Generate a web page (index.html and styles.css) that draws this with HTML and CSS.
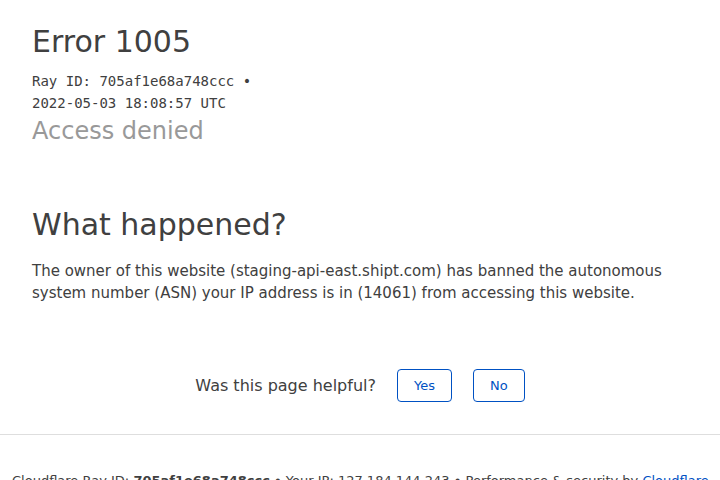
FILE: index.html
```html
<!DOCTYPE html>
<html>
<head>
<meta charset="utf-8">
<link rel="stylesheet" href="styles.css">
</head>
<body>
<div class="page">
  <header class="head">
    <h1 class="title">Error <span>1005</span></h1>
    <div class="ray">Ray ID: 705af1e68a748ccc •<br>2022-05-03 18:08:57 UTC</div>
    <h2 class="sub">Access denied</h2>
  </header>
  <section class="what">
    <h2 class="what-title">What happened?</h2>
    <p class="what-text">The owner of this website (staging-api-east.shipt.com) has banned the autonomous system number (ASN) your IP address is in (14061) from accessing this website.</p>
  </section>
  <div class="feedback">
    <span class="q">Was this page helpful?</span>
    <button class="btn">Yes</button>
    <button class="btn">No</button>
  </div>
  <footer class="foot">Cloudflare Ray ID: <strong>705af1e68a748ccc</strong> • Your IP: 127.184.144.243 • Performance &amp; security by <a href="#">Cloudflare</a></footer>
</div>
</body>
</html>
```

FILE: styles.css
```css
html, body {
  margin: 0;
  padding: 0;
  background: #fff;
}
body {
  font-family: "DejaVu Sans", sans-serif;
  color: #404040;
}
.head {
  padding: 24px 32px 0;
}
.title {
  margin: 0;
  font-size: 30px;
  font-weight: 400;
  line-height: 36px;
  color: #404040;
}
.ray {
  margin-top: 10px;
  font-family: "DejaVu Sans Mono", monospace;
  font-size: 14px;
  line-height: 22px;
  color: #404040;
}
.sub {
  margin: 2px 0 0;
  font-size: 24px;
  font-weight: 400;
  line-height: 30px;
  color: #999;
}
.what {
  padding: 61px 32px 0;
}
.what-title {
  margin: 0;
  font-size: 30px;
  font-weight: 400;
  line-height: 36px;
  color: #404040;
}
.what-text {
  margin: 17px 0 0;
  font-size: 15px;
  line-height: 22px;
  color: #404040;
}
.feedback {
  margin-top: 65px;
  display: flex;
  justify-content: center;
  align-items: center;
  gap: 21px;
  padding-bottom: 32px;
  border-bottom: 1px solid #dedede;
}
.q {
  font-size: 16px;
  color: #404040;
}
.btn {
  font-family: "DejaVu Sans", sans-serif;
  font-size: 13px;
  color: #0051c3;
  background: #fff;
  border: 1px solid #0051c3;
  border-radius: 4px;
  height: 33px;
  padding: 0 16px;
}
.foot {
  padding: 38px 12px 0;
  font-size: 13px;
  color: #404040;
  white-space: nowrap;
}
.foot a {
  color: #0051c3;
  text-decoration: none;
}
```
